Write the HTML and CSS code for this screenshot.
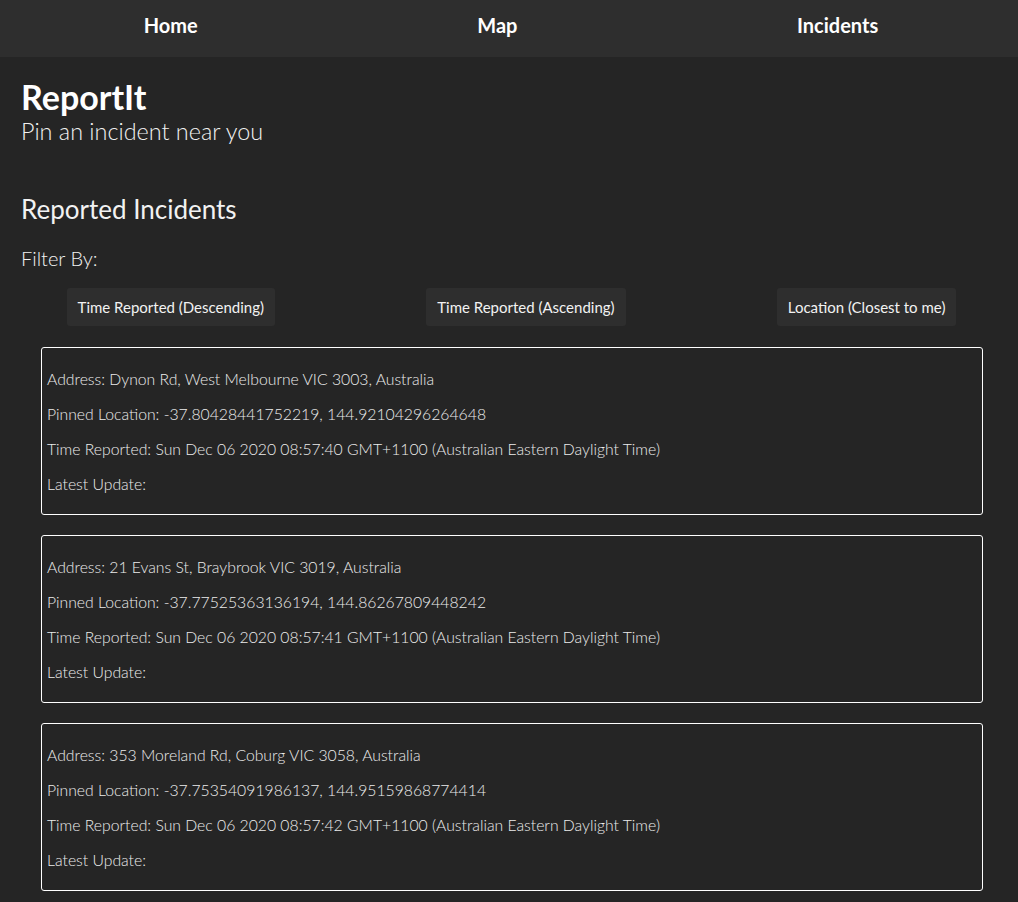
FILE: index.html
```html
<!DOCTYPE html>
<html>
<head>
<meta charset="utf-8">
<link rel="stylesheet" href="styles.css">
</head>
<body>
<nav class="nav">
  <a class="nav-link">Home</a>
  <a class="nav-link">Map</a>
  <a class="nav-link">Incidents</a>
</nav>
<main class="main">
  <h1 class="title">ReportIt</h1>
  <p class="subtitle">Pin an incident near you</p>
  <h2 class="section-title">Reported Incidents</h2>
  <p class="filter-label">Filter By:</p>
  <div class="filters">
    <button class="btn">Time Reported (Descending)</button>
    <button class="btn">Time Reported (Ascending)</button>
    <button class="btn">Location (Closest to me)</button>
  </div>
  <div class="cards">
    <div class="card">
      <p>Address: Dynon Rd, West Melbourne VIC 3003, Australia</p>
      <p>Pinned Location: -37.80428441752219, 144.92104296264648</p>
      <p>Time Reported: Sun Dec 06 2020 08:57:40 GMT+1100 (Australian Eastern Daylight Time)</p>
      <p>Latest Update:</p>
    </div>
    <div class="card">
      <p>Address: 21 Evans St, Braybrook VIC 3019, Australia</p>
      <p>Pinned Location: -37.77525363136194, 144.86267809448242</p>
      <p>Time Reported: Sun Dec 06 2020 08:57:41 GMT+1100 (Australian Eastern Daylight Time)</p>
      <p>Latest Update:</p>
    </div>
    <div class="card">
      <p>Address: 353 Moreland Rd, Coburg VIC 3058, Australia</p>
      <p>Pinned Location: -37.75354091986137, 144.95159868774414</p>
      <p>Time Reported: Sun Dec 06 2020 08:57:42 GMT+1100 (Australian Eastern Daylight Time)</p>
      <p>Latest Update:</p>
    </div>
  </div>
</main>
</body>
</html>
```

FILE: styles.css
```css
html, body {
  margin: 0;
  padding: 0;
  background: #252525;
  color: #f2f2f2;
  font-family: Lato, "Open Sans", sans-serif;
}
.nav {
  display: flex;
  justify-content: space-around;
  align-items: flex-start;
  height: 57px;
  padding-top: 12px;
  box-sizing: border-box;
  background: #2e2e2e;
}
.nav-link {
  font-weight: 700;
  font-size: 20px;
  line-height: 26px;
  color: #ffffff;
}
.nav-link:first-child { margin-left: 4px; }
.main {
  padding: 0 21px 20px 21px;
}
.title {
  margin: 21px 0 0 0;
  font-size: 34px;
  font-weight: 700;
  line-height: 38px;
  color: #ffffff;
}
.subtitle {
  margin: 0;
  font-size: 23.4px;
  font-weight: 300;
  line-height: 31px;
}
.section-title {
  margin: 46px 0 0 0;
  font-size: 26px;
  font-weight: 400;
  line-height: 32px;
}
.filter-label {
  margin: 21px 0 0 0;
  font-size: 20px;
  font-weight: 300;
  line-height: 24px;
}
.filters {
  display: flex;
  justify-content: space-around;
  margin: 18px -35px 0 -30px;
}
.btn {
  font-family: Lato, sans-serif;
  font-size: 15px;
  font-weight: 400;
  color: #f2f2f2;
  background: #2e2e2e;
  border: none;
  border-radius: 3px;
  height: 38px;
  padding: 0 11px;
}
.cards {
  display: flex;
  flex-direction: column;
  gap: 20px;
  margin: 21px 14px 0 20px;
}
.card {
  border: 1px solid #ffffff;
  border-radius: 3px;
  padding: 0 5px;
}
.card p {
  margin: 16px 0;
  font-size: 15.75px;
  font-weight: 300;
  line-height: 19px;
  color: #ececec;
}
.card p:first-child { margin-top: 21px; }
.card p:last-child { margin-bottom: 21px; }
```
